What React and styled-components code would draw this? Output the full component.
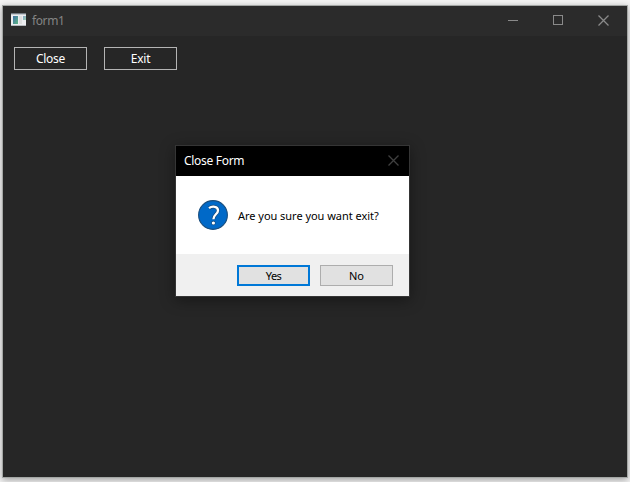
import React from "react";
import styled, { createGlobalStyle } from "styled-components";

const GlobalStyle = createGlobalStyle`
  * { box-sizing: border-box; }
  body {
    margin: 0;
    background: #f4f4f4;
    font-family: "Noto Sans", "Open Sans", sans-serif;
    overflow: hidden;
  }
`;

const Desktop = styled.div`
  width: 630px;
  height: 482px;
  padding: 5px 2px 4px;
  overflow: hidden;
`;

const Window = styled.section`
  position: relative;
  display: flex;
  flex-direction: column;
  width: 626px;
  height: 473px;
  border: 1px solid #a3a6a4;
  background: #262626;
  box-shadow: 0 2px 7px rgba(0, 0, 0, 0.35);
`;

const TitleBar = styled.header`
  display: flex;
  align-items: center;
  height: 30px;
  padding: 0 1px 0 8px;
  background: #2b2b2b;

  > svg {
    margin-bottom: 3px;
  }
`;

const WindowTitle = styled.span`
  flex: 1;
  margin-left: 6px;
  color: #848484;
  font-size: 12px;
  line-height: 16px;
  letter-spacing: -0.4px;
`;

const Caption = styled.span`
  display: flex;
  align-items: center;
  justify-content: center;
  width: 45px;
  height: 30px;
  padding-bottom: 1px;
`;

const Toolbar = styled.div`
  display: flex;
  gap: 17px;
  padding: 11px;
`;

const FlatButton = styled.button`
  width: 73px;
  height: 23px;
  padding: 0;
  border: 1px solid #b4b4b4;
  background: transparent;
  color: #fff;
  font: 12px/21px "Noto Sans", sans-serif;
  letter-spacing: -0.25px;
`;

const Dialog = styled.div`
  position: absolute;
  left: 172px;
  top: 139px;
  width: 235px;
  height: 152px;
  display: flex;
  flex-direction: column;
  border: 1px solid #353535;
  background: #fff;
  box-shadow: 0 3px 14px rgba(0, 0, 0, 0.4);
`;

const DialogTitle = styled.header`
  display: flex;
  align-items: center;
  justify-content: space-between;
  height: 30px;
  padding: 0 10px 0 8px;
  background: #000;
  color: #fff;
  font-size: 12px;
  line-height: 16px;
  letter-spacing: -0.3px;

  > svg {
    margin-bottom: 1px;
  }
`;

const Message = styled.div`
  display: flex;
  align-items: center;
  gap: 10px;
  height: 78px;
  padding-left: 22px;
  color: #000;
  font-size: 11px;
  line-height: 16px;
  white-space: nowrap;
`;

const MessageText = styled.span`
  padding-top: 2px;
  letter-spacing: -0.03px;
`;

const DialogFooter = styled.footer`
  display: flex;
  justify-content: flex-end;
  gap: 10px;
  height: 42px;
  padding: 11px 16px 0 0;
  background: #f0f0f0;
`;

const DialogButton = styled.button`
  width: 73px;
  height: 21px;
  padding: 0;
  border: ${(p) => (p.$primary ? "2px solid #0078d7" : "1px solid #adadad")};
  background: #e1e1e1;
  color: #000;
  font: 11px/17px "Noto Sans", sans-serif;
  letter-spacing: ${(p) => (p.$primary ? "-0.6px" : "-0.1px")};
`;

const AppIcon = () => (
  <svg width="15" height="13" viewBox="0 0 15 13" shapeRendering="crispEdges">
    <defs>
      <linearGradient id="pane" x1="0" y1="0" x2="1" y2="1">
        <stop offset="0" stopColor="#3f6fa6" />
        <stop offset="1" stopColor="#5fb784" />
      </linearGradient>
    </defs>
    <rect width="15" height="13" fill="#eceef0" />
    <rect width="15" height="1" fill="#747b82" />
    <rect y="1" width="15" height="1" fill="#c3c9ce" />
    <rect x="2" y="3" width="5" height="8" fill="url(#pane)" />
    <rect x="8" y="3" width="3" height="8" fill="#dededf" />
    <rect x="12" y="3" width="3" height="4" fill="url(#pane)" opacity=".6" />
    <rect y="12" width="15" height="1" fill="#b4b8bc" />
  </svg>
);

const Cross = ({ color }) => (
  <svg width="11" height="11" viewBox="0 0 11 11" stroke={color} strokeWidth="1.3">
    <path d="M.5 .5L10.5 10.5M10.5 .5L.5 10.5" />
  </svg>
);

const mark = "M11 8.2C14 5.9 20 6.1 20 10.4C20 14.1 15.4 14.5 15.4 19.2";

const QuestionIcon = () => (
  <svg width="30" height="30" viewBox="0 0 30 30" fill="none">
    <circle cx="15" cy="15" r="14.4" fill="#0069c8" stroke="#1b4e7d" strokeWidth="1.1" />
    <path d={mark} stroke="#174b7c" strokeWidth="3.7" />
    <circle cx="15.4" cy="23" r="2.2" fill="#174b7c" />
    <path d={mark} stroke="#fff" strokeWidth="2.3" />
    <circle cx="15.4" cy="23" r="1.6" fill="#fff" />
  </svg>
);

export default function App() {
  return (
    <>
      <GlobalStyle />
      <Desktop>
        <Window>
          <TitleBar>
            <AppIcon />
            <WindowTitle>form1</WindowTitle>
            <Caption>
              <svg width="11" height="11" viewBox="0 0 11 11">
                <path d="M0 5.5H10" stroke="#8a8a8a" />
              </svg>
            </Caption>
            <Caption>
              <svg width="11" height="11" viewBox="0 0 11 11">
                <rect x=".5" y=".5" width="9" height="9" fill="none" stroke="#8a8a8a" />
              </svg>
            </Caption>
            <Caption>
              <Cross color="#8a8a8a" />
            </Caption>
          </TitleBar>
          <Toolbar>
            <FlatButton>Close</FlatButton>
            <FlatButton>Exit</FlatButton>
          </Toolbar>
          <Dialog role="dialog">
            <DialogTitle>
              Close Form
              <Cross color="#404040" />
            </DialogTitle>
            <Message>
              <QuestionIcon />
              <MessageText>Are you sure you want exit?</MessageText>
            </Message>
            <DialogFooter>
              <DialogButton $primary>Yes</DialogButton>
              <DialogButton>No</DialogButton>
            </DialogFooter>
          </Dialog>
        </Window>
      </Desktop>
    </>
  );
}
